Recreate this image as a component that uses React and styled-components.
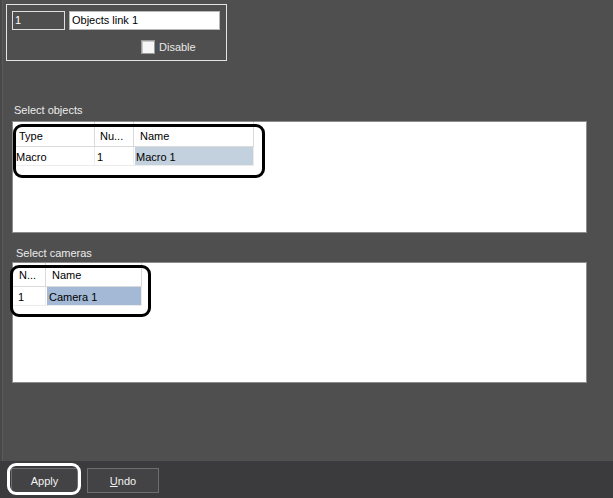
import React from 'react';
import styled, { createGlobalStyle } from 'styled-components';

const GlobalStyle = createGlobalStyle`
  body {
    margin: 0;
    background: #4f4f4f;
    font-family: 'Liberation Sans', Arial, sans-serif;
    font-size: 11px;
  }
`;

const Window = styled.div`
  width: 613px;
  height: 498px;
  display: flex;
  flex-direction: column;
  overflow: hidden;
  background: #4f4f4f;
`;

const Main = styled.div`
  height: 461px;
  display: flex;
  flex-direction: column;
  box-shadow: inset 2px 0 #484848, inset 3px 0 #5a5a5a;
`;

const GroupBox = styled.div`
  box-sizing: border-box;
  margin: 4px 0 0 6px;
  width: 221px;
  height: 57px;
  border: 1px solid #e4e4e4;
  padding: 6px 0 0 5px;
  display: flex;
  flex-direction: column;
`;

const InputRow = styled.div`
  display: flex;
  gap: 4px;
`;

const Input = styled.div`
  box-sizing: border-box;
  width: ${(p) => p.width}px;
  height: 19px;
  padding: 0 0 0 2px;
  line-height: 17px;
  border: 1px solid ${(p) => (p.light ? '#b8b8b8' : '#dedede')};
  background: ${(p) => (p.light ? '#ffffff' : '#4f4f4f')};
  color: ${(p) => (p.light ? '#000' : '#fff')};
`;

const CheckRow = styled.div`
  display: flex;
  align-items: center;
  gap: 4px;
  margin: 10px 0 0 129px;
  color: #e8e8e8;
`;

const CheckBox = styled.span`
  box-sizing: border-box;
  width: 14px;
  height: 14px;
  border: 1px solid #9a9a9a;
  background: #f6f6f6;
  box-shadow: inset 1px 1px #c8c8c8;
`;

const SectionLabel = styled.div`
  margin: ${(p) => p.top}px 0 0 ${(p) => p.left}px;
  line-height: 13px;
  color: #ececec;
`;

const ListBox = styled.div`
  position: relative;
  box-sizing: border-box;
  margin: ${(p) => p.gap}px 0 0 12px;
  width: 575px;
  height: ${(p) => p.height}px;
  border: 1px solid #8c8c8c;
  background: #fff;
`;

const Grid = styled.div`
  display: grid;
  grid-template-columns: ${(p) => p.cols};
  width: max-content;
`;

const HeadCell = styled.div`
  box-sizing: border-box;
  height: ${(p) => p.h}px;
  padding: ${(p) => p.pt}px 0 0 ${(p) => p.pl}px;
  line-height: 13px;
  border-right: 1px solid #dadada;
  border-bottom: 1px solid #dadada;
  color: #000;
  white-space: nowrap;
`;

const Cell = styled.div`
  box-sizing: border-box;
  height: 19px;
  padding: ${(p) => p.pt}px 0 0 ${(p) => p.pl}px;
  line-height: 13px;
  border-right: 1px solid #ececec;
  border-bottom: 1px solid #ececec;
  color: #000;
  white-space: nowrap;
`;

const SelCell = styled(Cell)`
  padding: 0 0 0 1px;
  & > span {
    display: block;
    height: 100%;
    box-sizing: border-box;
    padding: ${(p) => p.pt}px 0 0 ${(p) => p.pl}px;
    background: ${(p) => p.sel};
  }
`;

// the black callout frames drawn over the screenshot
const Callout = styled.span`
  position: absolute;
  box-sizing: border-box;
  left: ${(p) => p.x}px;
  top: ${(p) => p.y}px;
  width: ${(p) => p.w}px;
  height: ${(p) => p.h}px;
  border: 3px solid ${(p) => p.color || '#000'};
  border-radius: 9px;
  pointer-events: none;
`;

const BottomBar = styled.div`
  height: 37px;
  background: #3b3a3c;
  display: flex;
  gap: 9px;
  padding: 7px 0 0 11px;
  box-sizing: border-box;
`;

const ButtonWrap = styled.div`
  position: relative;
`;

const Button = styled.div`
  box-sizing: border-box;
  width: ${(p) => p.width}px;
  height: 25px;
  border: 1px solid #6e6e6e;
  background: #434244;
  color: #f2f2f2;
  display: flex;
  align-items: center;
  justify-content: center;
  font-size: 11px;
  u {
    text-decoration: underline;
  }
`;

export default function App() {
  return (
    <Window>
      <GlobalStyle />
      <Main>
        <GroupBox>
          <InputRow>
            <Input width={53}>1</Input>
            <Input width={151} light>
              Objects link 1
            </Input>
          </InputRow>
          <CheckRow>
            <CheckBox />
            <span>Disable</span>
          </CheckRow>
        </GroupBox>

        <SectionLabel top={43} left={14}>
          Select objects
        </SectionLabel>
        <ListBox gap={4} height={112}>
          <Grid cols="82px 39px 120px">
            <HeadCell h={25} pt={8} pl={6}>Type</HeadCell>
            <HeadCell h={25} pt={8} pl={5}>Nu...</HeadCell>
            <HeadCell h={25} pt={8} pl={6}>Name</HeadCell>
            <Cell pt={4} pl={3}>Macro</Cell>
            <Cell pt={4} pl={2}>1</Cell>
            <SelCell pt={4} pl={1} sel="#c3d0de">
              <span>Macro 1</span>
            </SelCell>
          </Grid>
          <Callout x={0} y={2} w={252} h={54} />
        </ListBox>

        <SectionLabel top={14} left={16}>
          Select cameras
        </SectionLabel>
        <ListBox gap={2} height={121}>
          <Grid cols="33px 96px">
            <HeadCell h={24} pt={6} pl={6}>N...</HeadCell>
            <HeadCell h={24} pt={6} pl={6}>Name</HeadCell>
            <Cell pt={4} pl={5}>1</Cell>
            <SelCell pt={4} pl={2} sel="#a3b9d6">
              <span>Camera 1</span>
            </SelCell>
          </Grid>
          <Callout x={-3} y={2} w={141} h={52} />
        </ListBox>
      </Main>

      <BottomBar>
        <ButtonWrap>
          <Button width={67}>Apply</Button>
          <Callout x={-4} y={-5} w={74} h={32} color="#fff" />
        </ButtonWrap>
        <Button width={72}>
          <span>
            <u>U</u>ndo
          </span>
        </Button>
      </BottomBar>
    </Window>
  );
}
